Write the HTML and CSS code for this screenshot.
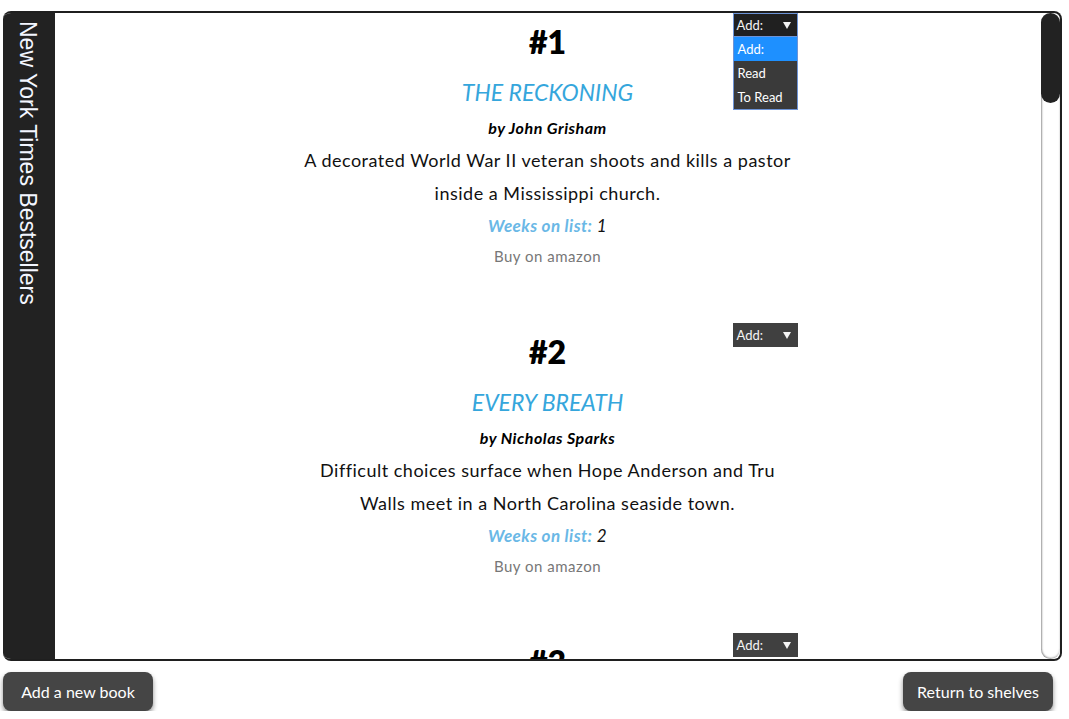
FILE: index.html
```html
<!DOCTYPE html>
<html>
<head>
<meta charset="utf-8">
<link rel="stylesheet" href="styles.css">
</head>
<body>
<div class="shelf">
  <div class="sidebar"><span class="side-title">New York Times Bestsellers</span></div>
  <div class="list">
    <div class="book">
      <div class="select open">
        <div class="select-box">Add:<span class="arrow"></span></div>
        <div class="options">
          <div class="opt active">Add:</div>
          <div class="opt">Read</div>
          <div class="opt">To Read</div>
        </div>
      </div>
      <h2 class="rank">#1</h2>
      <h3 class="title">THE RECKONING</h3>
      <p class="author">by John Grisham</p>
      <p class="desc">A decorated World War II veteran shoots and kills a pastor inside a Mississippi church.</p>
      <p class="weeks"><b>Weeks on list:</b> 1</p>
      <p class="buy">Buy on amazon</p>
    </div>
    <div class="book">
      <div class="select"><div class="select-box">Add:<span class="arrow"></span></div></div>
      <h2 class="rank">#2</h2>
      <h3 class="title">EVERY BREATH</h3>
      <p class="author">by Nicholas Sparks</p>
      <p class="desc">Difficult choices surface when Hope Anderson and Tru Walls meet in a North Carolina seaside town.</p>
      <p class="weeks"><b>Weeks on list:</b> 2</p>
      <p class="buy">Buy on amazon</p>
    </div>
    <div class="book">
      <div class="select"><div class="select-box">Add:<span class="arrow"></span></div></div>
      <h2 class="rank">#3</h2>
    </div>
  </div>
  <div class="scrollbar">
    <div class="track"><div class="thumb"></div></div>
  </div>
</div>
<div class="actions">
  <button class="btn">Add a new book</button>
  <button class="btn">Return to shelves</button>
</div>
</body>
</html>
```

FILE: styles.css
```css
* { box-sizing: border-box; }
html, body { margin: 0; padding: 0; background: #fff; }
body {
  font-family: Lato, "Open Sans", sans-serif;
  color: #111;
}
.shelf {
  margin: 11px 7px 0 3px;
  height: 650px;
  border: 2px solid #1f1f1f;
  border-left: none;
  border-radius: 8px;
  display: flex;
  overflow: hidden;
}
.sidebar {
  width: 52px;
  flex: none;
  background: #222;
  padding: 8px 0 0 0;
  display: flex;
  justify-content: center;
}
.side-title {
  writing-mode: vertical-rl;
  font-family: "Liberation Sans", Arial, sans-serif;
  font-size: 23px;
  color: #f3f6ff;
  line-height: 26px;
  margin-right: 2px;
}
.list {
  flex: 1;
  overflow: hidden;
}
.scrollbar {
  width: 20px;
  flex: none;
  padding: 0 0 0 1px;
}
.track {
  height: 100%;
  border-radius: 10px;
  background: #fff;
  box-shadow: inset 1px 0 2px rgba(0,0,0,0.35), inset 0 -1px 2px rgba(0,0,0,0.25);
}
.thumb {
  height: 90px;
  background: #222;
  border-radius: 10px;
}
.book {
  position: relative;
  width: 500px;
  height: 310px;
  margin: 0 auto;
  padding-top: 9px;
  text-align: center;
}
.rank {
  margin: 0;
  font-size: 32px;
  line-height: 40px;
  font-weight: 800;
  color: #000;
}
.title {
  margin: 10px 0 0;
  font-size: 23px;
  line-height: 40px;
  font-style: italic;
  font-weight: 400;
  color: #35a6dc;
}
.author {
  margin: 0;
  font-size: 16px;
  line-height: 32px;
  font-style: italic;
  font-weight: 700;
  letter-spacing: 0.5px;
  color: #000;
}
.desc {
  margin: 0;
  font-size: 18px;
  line-height: 33px;
  letter-spacing: 0.5px;
  color: #111;
}
.weeks {
  margin: 0;
  font-size: 17px;
  line-height: 32px;
  font-style: italic;
  letter-spacing: 0.4px;
}
.weeks b { color: #6ab8e6; font-weight: 700; }
.buy {
  margin: 0;
  font-size: 15px;
  line-height: 28px;
  letter-spacing: 0.5px;
  color: #777;
}
.select {
  position: absolute;
  top: 0;
  right: 0;
  width: 65px;
  text-align: left;
  z-index: 2;
}
.select-box {
  height: 24px;
  background: #404040;
  color: #f4f4f4;
  font-size: 13px;
  line-height: 24px;
  padding-left: 4px;
  position: relative;
}
.arrow {
  position: absolute;
  right: 7px;
  top: 9px;
  width: 0;
  height: 0;
  border-left: 4px solid transparent;
  border-right: 4px solid transparent;
  border-top: 7px solid #f4f4f4;
}
.open .select-box {
  background: #202020;
  border: 1px solid #6d93d6;
  line-height: 22px;
  padding-left: 3px;
}
.open .arrow { right: 6px; top: 8px; }
.options {
  background: #3a3a3a;
  border: 1px solid #6d93d6;
  border-top: none;
}
.opt {
  height: 24px;
  line-height: 24px;
  font-size: 13px;
  color: #fff;
  padding-left: 4px;
}
.opt.active { background: #1e90ff; }
.actions {
  display: flex;
  justify-content: space-between;
  margin: 11px 16px 0 3px;
}
.btn {
  width: 150px;
  height: 39px;
  background: #454545;
  color: #fff;
  border: none;
  border-radius: 8px;
  font-family: Lato, "Open Sans", sans-serif;
  font-size: 16px;
  box-shadow: 0 3px 5px rgba(0,0,0,0.45);
}
```
